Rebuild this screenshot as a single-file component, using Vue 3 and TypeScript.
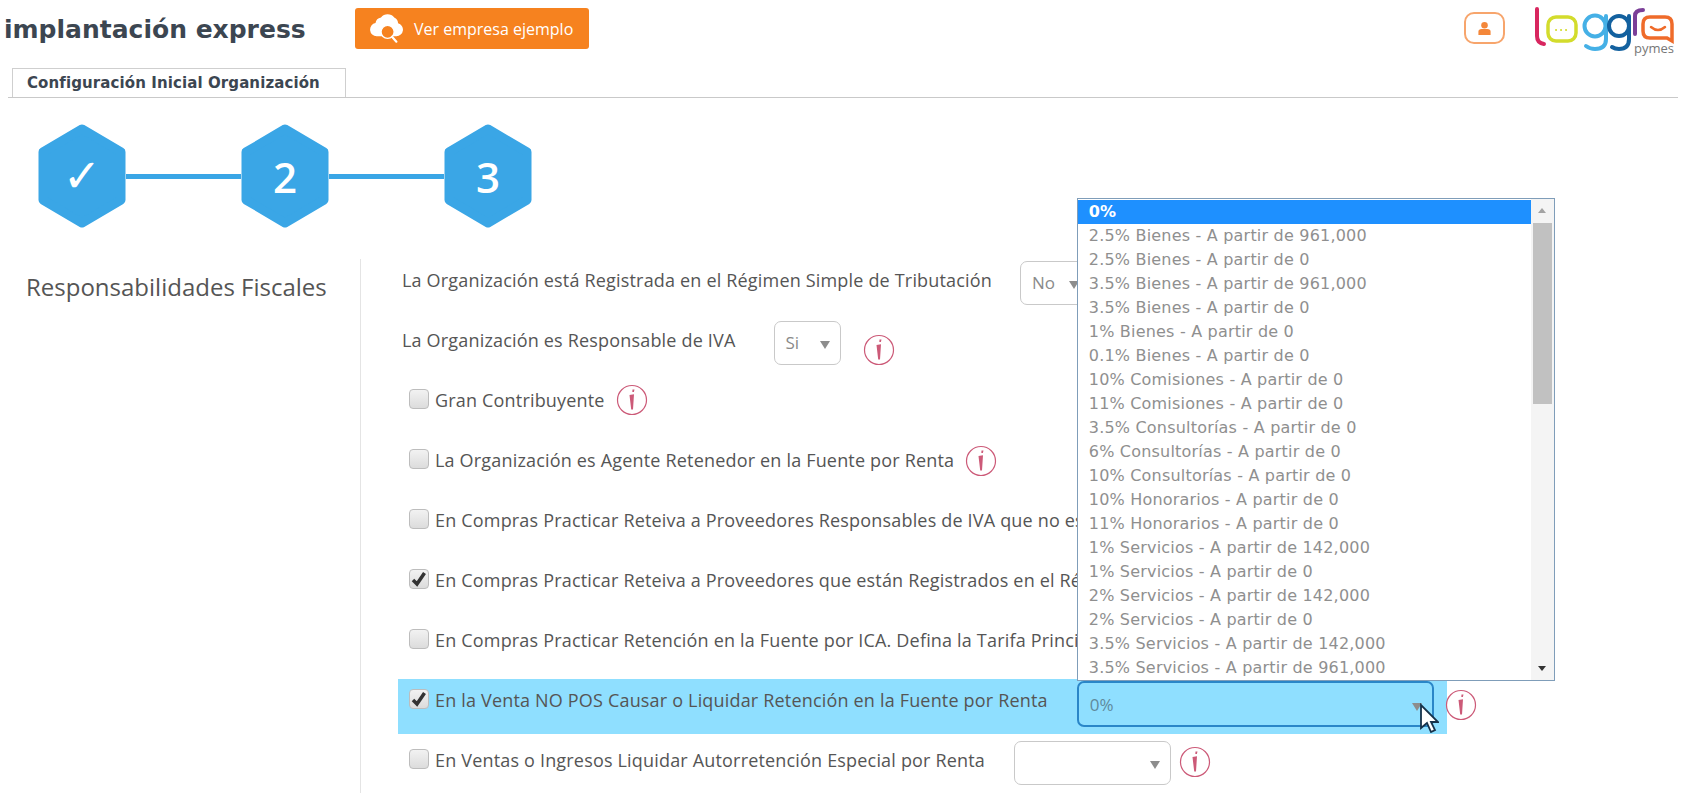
<script setup lang="ts">
interface Row {
  label: string;
  check?: boolean;
  checked?: boolean;
  select?: string;
  selectWidth?: number;
  gap?: number;
  info?: number;
  infoTop?: number;
  active?: boolean;
}

const rows: Row[] = [
  { label: "La Organización está Registrada en el Régimen Simple de Tributación", select: "No", selectWidth: 70, gap: 28 },
  { label: "La Organización es Responsable de IVA", select: "Si", selectWidth: 67, gap: 38, info: 22, infoTop: 15 },
  { label: "Gran Contribuyente", check: true, info: 11, infoTop: 5 },
  { label: "La Organización es Agente Retenedor en la Fuente por Renta", check: true, info: 11, infoTop: 6 },
  { label: "En Compras Practicar Reteiva a Proveedores Responsables de IVA que no es", check: true },
  { label: "En Compras Practicar Reteiva a Proveedores que están Registrados en el Ré", check: true, checked: true },
  { label: "En Compras Practicar Retención en la Fuente por ICA. Defina la Tarifa Princi", check: true },
  { label: "En la Venta NO POS Causar o Liquidar Retención en la Fuente por Renta", check: true, checked: true, select: "0%", selectWidth: 357, gap: 29, info: 11, infoTop: 10, active: true },
  { label: "En Ventas o Ingresos Liquidar Autorretención Especial por Renta", check: true, select: "", selectWidth: 157, gap: 29, info: 8, infoTop: 7 },
];

const options: string[] = [
  "0%",
  "2.5% Bienes - A partir de 961,000",
  "2.5% Bienes - A partir de 0",
  "3.5% Bienes - A partir de 961,000",
  "3.5% Bienes - A partir de 0",
  "1% Bienes - A partir de 0",
  "0.1% Bienes - A partir de 0",
  "10% Comisiones - A partir de 0",
  "11% Comisiones - A partir de 0",
  "3.5% Consultorías - A partir de 0",
  "6% Consultorías - A partir de 0",
  "10% Consultorías - A partir de 0",
  "10% Honorarios - A partir de 0",
  "11% Honorarios - A partir de 0",
  "1% Servicios - A partir de 142,000",
  "1% Servicios - A partir de 0",
  "2% Servicios - A partir de 142,000",
  "2% Servicios - A partir de 0",
  "3.5% Servicios - A partir de 142,000",
  "3.5% Servicios - A partir de 961,000",
];

const steps = ["✓", "2", "3"];
</script>

<template>
  <div class="page">
    <header class="top">
      <h1 class="title">implantación express</h1>
      <button class="demo" type="button">
        <svg class="demo-icon" viewBox="0 0 30 30" aria-hidden="true">
          <path fill="#fff" d="M6 22a6 6 0 0 1-1-11.900A6 6 0 0 1 10 5a7.500 7.500 0 0 1 12 0 6 6 0 0 1 3.500 5.200A6 6 0 0 1 24 22z" />
          <circle cx="16" cy="18" r="6" fill="#f6821f" stroke="#fff" stroke-width="1.300" />
          <path d="M20 22.500l4 4.500" stroke="#fff" stroke-width="2" stroke-linecap="round" />
        </svg>
        Ver empresa ejemplo
      </button>
      <div class="brand">
        <div class="user">
          <svg viewBox="0 0 16 16" width="15" height="15" aria-hidden="true">
            <circle cx="8" cy="4.500" r="3.500" fill="#f4873a" />
            <path fill="#f4873a" d="M1.500 15v-3.500Q1.500 8.500 5 8.500h6q3.500 0 3.500 3V15z" />
          </svg>
        </div>
        <div class="logo">
          <svg viewBox="0 0 150 56" width="150" height="56" aria-hidden="true" fill="none" stroke-linecap="round">
            <path d="M7 9v27q0 7 7 8" stroke="#d8265f" stroke-width="4" />
            <rect x="18" y="17" width="28" height="24" rx="8" stroke="#d3dc2c" stroke-width="3.500" />
            <path d="M26 30h.1M31 30h.1M36 30h.1" stroke="#d3dc2c" stroke-width="2" />
            <circle cx="65" cy="26" r="10.500" stroke="#45b0e6" stroke-width="4" />
            <path d="M76 16v23q0 10-11 10-5 0-9-3" stroke="#45b0e6" stroke-width="4" />
            <circle cx="89" cy="26" r="10" stroke="#13619f" stroke-width="4" />
            <path d="M99 16v23q0 10-10 10-4 0-7-2" stroke="#13619f" stroke-width="4" />
            <path d="M105 34V16q0-6 8-6" stroke="#7b3f98" stroke-width="4" />
            <path d="M120 17h15q7 0 7 7v17l-5-3h-17q-7 0-7-7v-7q0-7 7-7z" stroke="#ef6b2a" stroke-width="3.500" />
            <path d="M121 27q7 6 14 0" stroke="#ef6b2a" stroke-width="2.500" />
          </svg>
          <span class="pymes">pymes</span>
        </div>
      </div>
    </header>

    <nav class="tabs">
      <span class="tab">Configuración Inicial Organización</span>
    </nav>

    <div class="stepper">
      <template v-for="(step, i) in steps" :key="step">
        <div v-if="i > 0" class="link"></div>
        <div class="hex" :class="{ done: i === 0 }">
          <svg viewBox="0 0 88 104" width="88" height="104" aria-hidden="true">
            <path d="M44 5 83 28V76L44 99 5 76V28Z" fill="#3aa6e6" stroke="#3aa6e6" stroke-width="9" stroke-linejoin="round" />
          </svg>
          <span class="hex-text">{{ step }}</span>
        </div>
      </template>
    </div>

    <section class="body">
      <aside class="side">Responsabilidades Fiscales</aside>
      <div class="form">
        <div v-for="row in rows" :key="row.label" class="row" :class="{ active: row.active, plain: !row.check }">
          <span v-if="row.check" class="check" :class="{ on: row.checked }">
            <svg v-if="row.checked" viewBox="0 0 20 20" width="20" height="20" aria-hidden="true">
              <path d="M4 11 8 15 15.500 4" fill="none" stroke="#333" stroke-width="3.500" />
            </svg>
          </span>
          <span class="label">{{ row.label }}</span>
          <div
            v-if="row.select !== undefined"
            class="select"
            :class="{ focused: row.active }"
            :style="{ width: row.selectWidth + 'px', marginLeft: row.gap + 'px' }"
          >
            {{ row.select }}
            <i class="arrow"></i>
            <ul v-if="row.active" class="list">
              <li v-for="(opt, n) in options" :key="opt" :class="{ sel: n === 0 }">{{ opt }}</li>
              <div class="scroll">
                <i class="up"></i>
                <b class="thumb"></b>
                <i class="down"></i>
              </div>
            </ul>
            <svg v-if="row.active" class="cursor" viewBox="0 0 20 30" width="20" height="30" aria-hidden="true">
              <path d="M2 2v23l6-5 4 9 4-2-4-8h7z" fill="#fff" stroke="#16324a" stroke-width="1.800" />
            </svg>
          </div>
          <svg
            v-if="row.info"
            class="info"
            viewBox="0 0 32 32"
            width="32"
            height="32"
            aria-hidden="true"
            :style="{ marginLeft: row.info + 'px', marginTop: row.infoTop + 'px' }"
          >
            <circle cx="16" cy="16" r="14.500" fill="none" stroke="#cc5a78" stroke-width="1.200" />
            <path d="M16.500 5.500h2l-.6 2.500h-1.600zM13.500 11l4.500-.8-1 15.300h-1.800z" fill="#cc5a78" />
          </svg>
        </div>
      </div>
    </section>
  </div>
</template>

<style scoped>
.page {
  width: 1689px;
  height: 793px;
  overflow: hidden;
  background: #fff;
  font-family: "Open Sans", "Noto Sans", sans-serif;
  color: #555;
}

.top {
  display: flex;
  align-items: flex-start;
  height: 68px;
  padding: 8px 9px 0 4px;
  box-sizing: border-box;
}

.title {
  margin: 0;
  width: 351px;
  font-family: "DejaVu Sans", sans-serif;
  font-size: 25px;
  line-height: 44px;
  font-weight: 700;
  color: #3c4651;
  white-space: nowrap;
}

.demo {
  display: flex;
  align-items: center;
  gap: 11px;
  width: 234px;
  height: 41px;
  padding: 0 0 0 15px;
  border: none;
  border-radius: 3px;
  background: #f6821f;
  color: #fff;
  font-family: inherit;
  font-size: 16px;
}

.demo-icon {
  width: 33px;
  height: 33px;
}

.brand {
  display: flex;
  margin-left: auto;
}

.user {
  display: flex;
  align-items: center;
  justify-content: center;
  width: 41px;
  height: 32px;
  margin: 4px 25px 0 0;
  box-sizing: border-box;
  border: 2px solid #f7a56c;
  border-radius: 10px;
}

.logo {
  position: relative;
  width: 150px;
  height: 56px;
  margin-top: -8px;
}

.pymes {
  position: absolute;
  right: 6px;
  top: 42px;
  font-size: 13px;
  line-height: 12px;
  color: #777;
}

.tabs {
  display: flex;
  height: 29px;
  margin: 0 11px 0 8px;
  padding-left: 4px;
  border-bottom: 1px solid #c9c9c9;
}

.tab {
  width: 334px;
  height: 29px;
  box-sizing: border-box;
  padding-left: 14px;
  border: 1px solid #cfcfcf;
  border-bottom: none;
  background: #fff;
  font-family: "DejaVu Sans", sans-serif;
  font-size: 15px;
  line-height: 28px;
  font-weight: 700;
  letter-spacing: 0.1px;
  color: #3c4651;
  white-space: nowrap;
}

.stepper {
  display: flex;
  align-items: center;
  height: 104px;
  margin: 26px 0 0 38px;
}

.hex {
  position: relative;
  width: 88px;
  height: 104px;
}

.hex svg {
  display: block;
}

.hex-text {
  position: absolute;
  inset: 0;
  display: flex;
  align-items: center;
  justify-content: center;
  color: #fff;
  font-size: 42px;
  font-weight: 600;
}

.hex.done .hex-text {
  font-family: "DejaVu Sans", sans-serif;
  font-weight: 400;
  font-size: 46px;
}

.link {
  width: 115px;
  height: 5px;
  background: #3aa6e6;
}

.body {
  display: flex;
  margin-top: 31px;
}

.side {
  width: 360px;
  box-sizing: border-box;
  padding: 13px 0 0 26px;
  font-size: 24px;
  line-height: 30px;
  color: #555;
}

.form {
  flex: 1;
  display: flex;
  flex-direction: column;
  gap: 5px;
  padding-left: 37px;
  border-left: 1px solid #e4e4e4;
}

.row {
  display: flex;
  align-items: flex-start;
  width: 1049px;
  height: 55px;
  box-sizing: border-box;
  padding-left: 11px;
  white-space: nowrap;
}

.row.plain {
  padding-left: 4px;
}

.row.active {
  background: #8fdfff;
}

.label {
  flex: none;
  font-size: 18px;
  line-height: 42px;
  letter-spacing: 0.18px;
  color: #555;
}

.check {
  display: flex;
  align-items: center;
  justify-content: center;
  flex: none;
  width: 20px;
  height: 20px;
  margin: 10px 6px 0 0;
  box-sizing: border-box;
  border: 1px solid #bdbdbd;
  border-radius: 4px;
  background: linear-gradient(#f2f2f2, #dcdcdc);
}

.check svg {
  flex: none;
}

.select {
  position: relative;
  flex: none;
  height: 44px;
  margin-top: 2px;
  box-sizing: border-box;
  padding-left: 11px;
  border: 1px solid #c9c9c9;
  border-radius: 7px;
  background: #fff;
  font-size: 17px;
  line-height: 42px;
  color: #8a8a8a;
}

.select.focused {
  border: 2px solid #2a86c8;
  background: transparent;
  line-height: 44px;
  color: #5f8a9c;
  height: 46px;
}

.arrow {
  position: absolute;
  right: 10px;
  top: 19px;
  border-left: 5px solid transparent;
  border-right: 5px solid transparent;
  border-top: 8px solid #8d8d8d;
}

.focused .arrow {
  right: 10px;
  top: 20px;
}

.list {
  position: absolute;
  left: -2px;
  bottom: calc(100% + 2px);
  width: 478px;
  height: 483px;
  margin: 0;
  padding: 1px 0 0;
  box-sizing: border-box;
  border: 1px solid #7f9db9;
  background: #fff;
  list-style: none;
  overflow: hidden;
  z-index: 2;
}

.list li {
  height: 24px;
  padding-left: 11px;
  font-family: "DejaVu Sans", sans-serif;
  font-size: 16px;
  line-height: 24px;
  letter-spacing: 0.2px;
  color: #8f8f8f;
}

.list li.sel {
  background: #1e90ff;
  color: #fff;
  font-weight: 700;
}

.scroll {
  position: absolute;
  top: 0;
  right: 0;
  bottom: 0;
  display: flex;
  flex-direction: column;
  align-items: center;
  width: 23px;
  background: #f4f4f4;
}

.up {
  margin-top: 9px;
  border-left: 4px solid transparent;
  border-right: 4px solid transparent;
  border-bottom: 5px solid #a3a3a3;
}

.thumb {
  width: 19px;
  height: 181px;
  margin-top: 10px;
  background: #c1c1c1;
}

.down {
  margin-top: auto;
  margin-bottom: 9px;
  border-left: 4px solid transparent;
  border-right: 4px solid transparent;
  border-top: 5px solid #333;
}

.cursor {
  position: absolute;
  right: -7px;
  top: 20px;
  z-index: 3;
}

.info {
  flex: none;
}
</style>

<style>
html,
body {
  overflow: hidden;
}
</style>
